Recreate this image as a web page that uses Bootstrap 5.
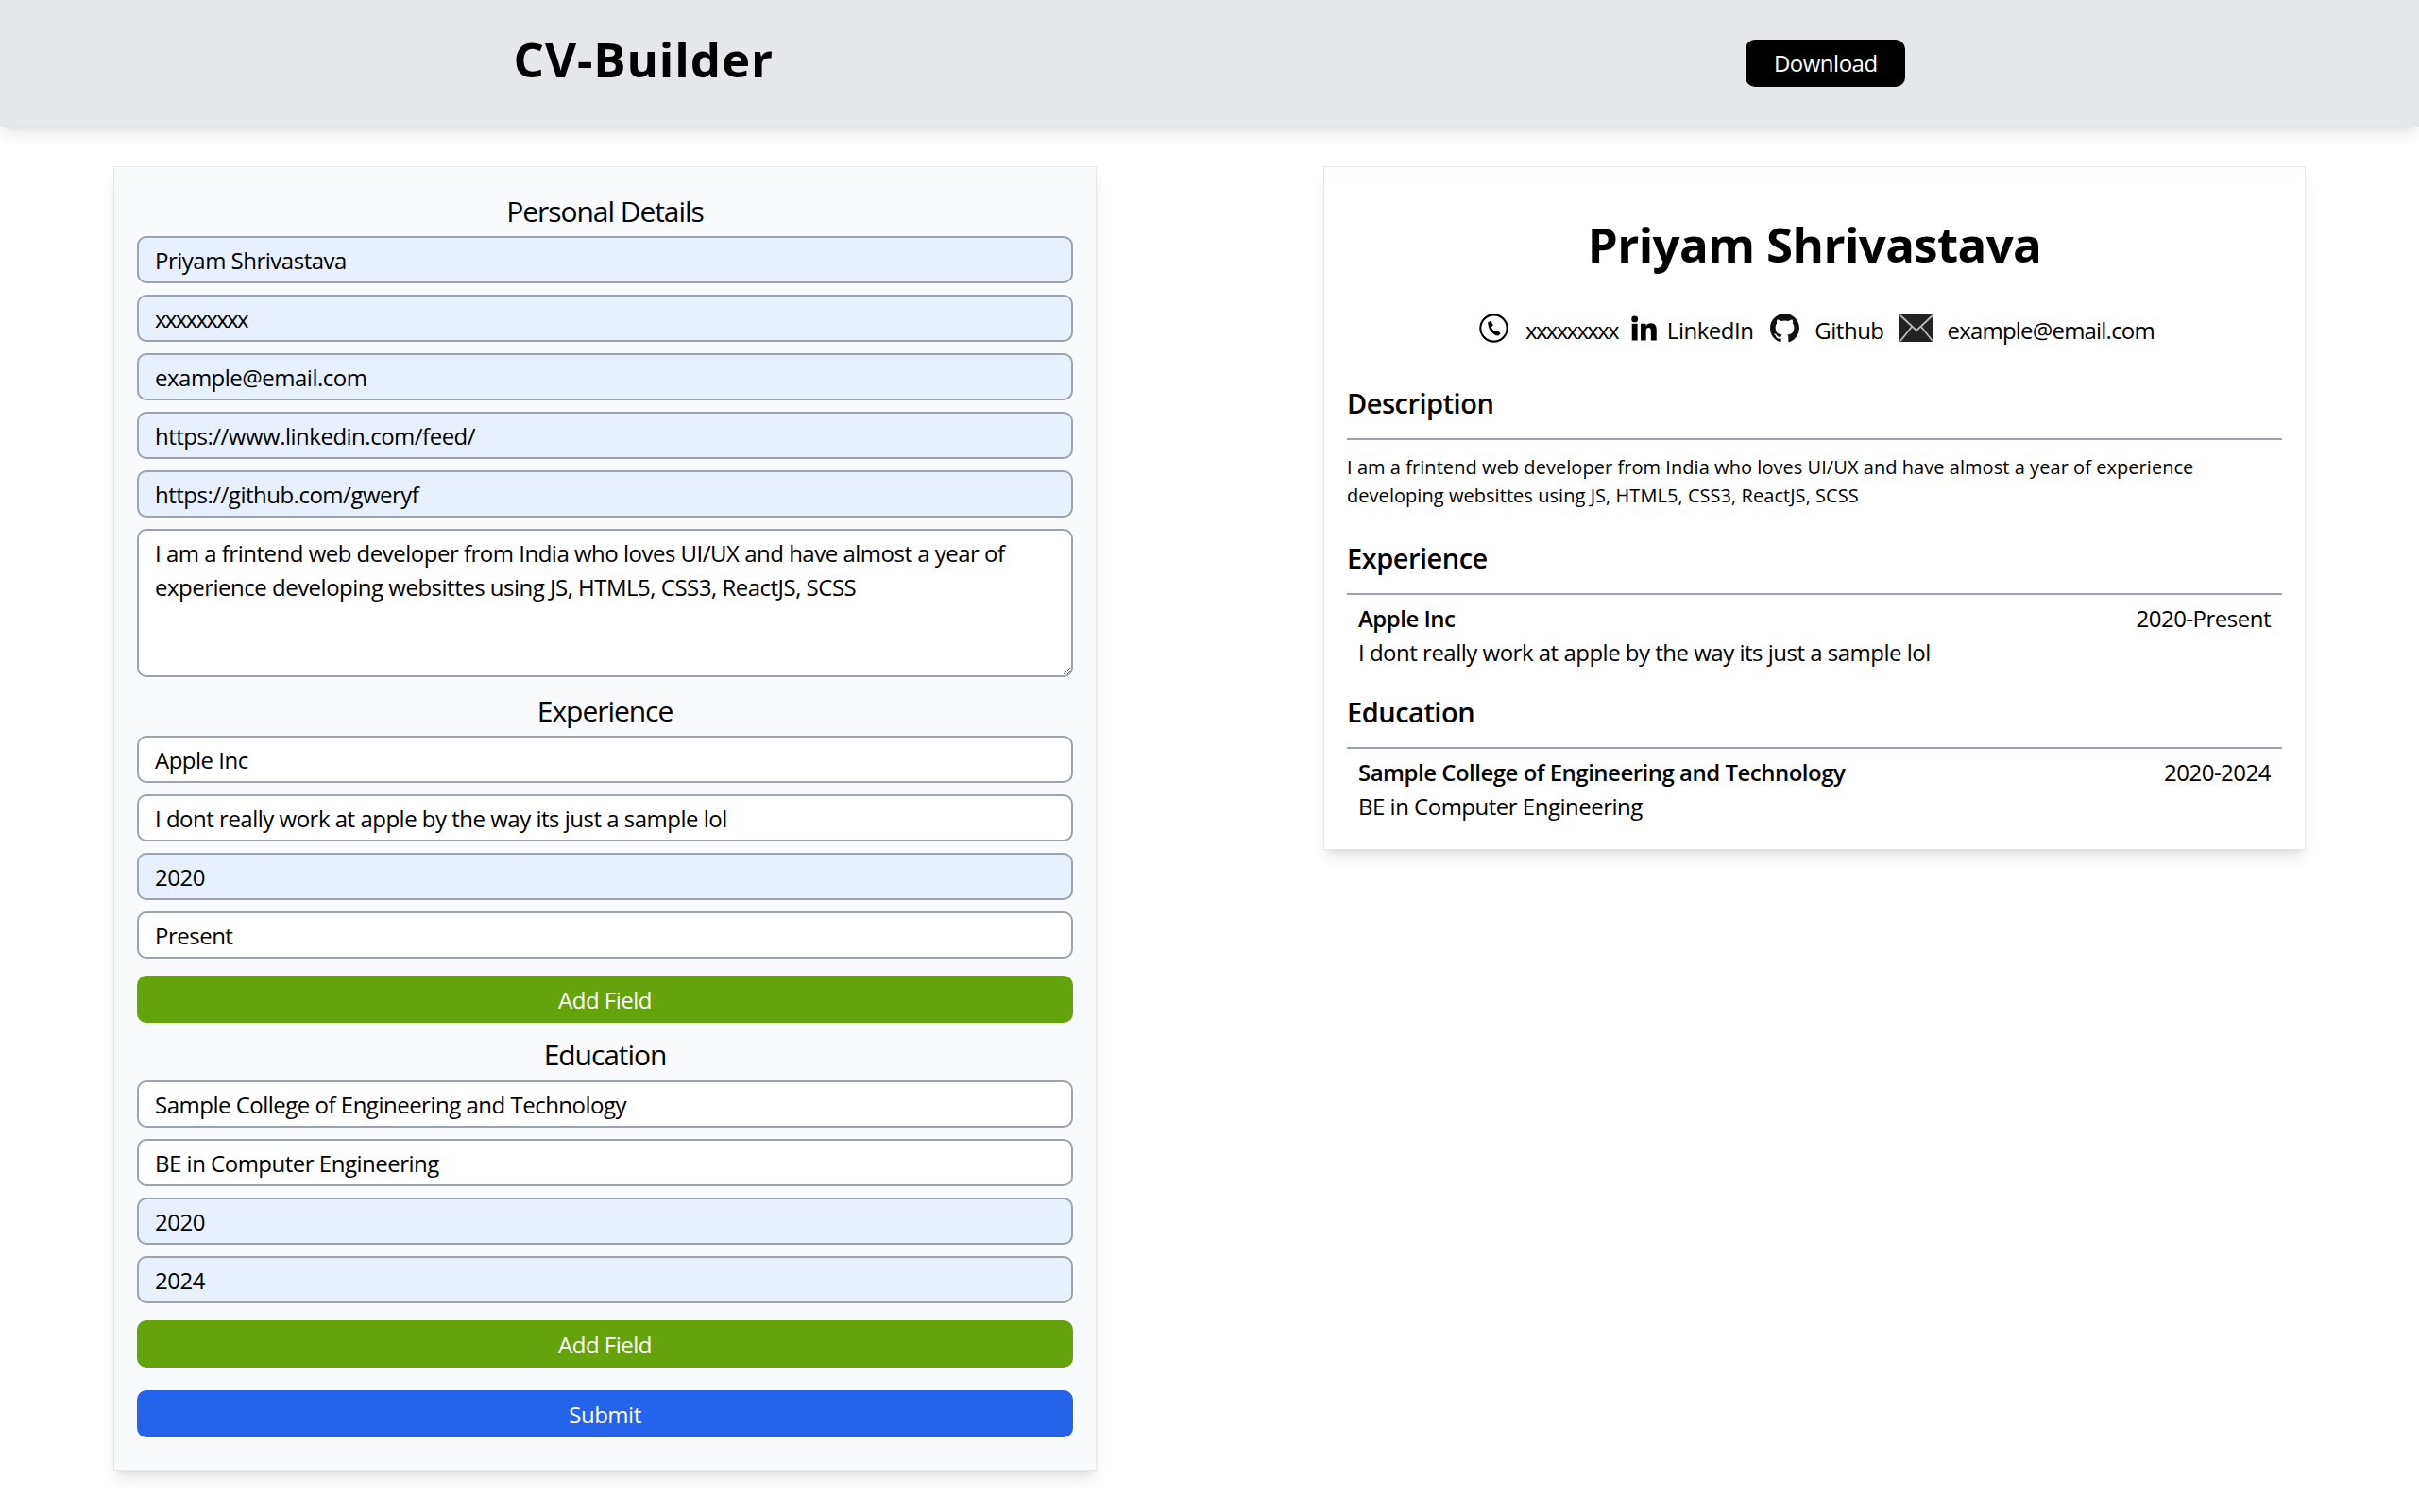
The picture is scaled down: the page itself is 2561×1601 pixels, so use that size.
<!DOCTYPE html>
<html lang="en">
<head>
<meta charset="UTF-8">
<title>CV-Builder</title>
<link href="https://cdn.jsdelivr.net/npm/bootstrap@5.3.3/dist/css/bootstrap.min.css" rel="stylesheet">
<style>
    body { font-family: "Open Sans", "Noto Sans", sans-serif; color: #000; background: #fff; height: 1601px; overflow: hidden; }
    .top-bar { height: 134px; background: #e5e7eb; box-shadow: 0 10px 15px -3px rgba(0,0,0,.1), 0 4px 6px -4px rgba(0,0,0,.1); }
    .top-title { font-size: 51px; font-weight: 700; letter-spacing: .9px; margin: 0; line-height: 64px; padding-left: 82px; padding-bottom: 10px; }
    .btn-download { background: #000; color: #fff; border: 0; border-radius: 10px; width: 169px; height: 50px; font-size: 24px; letter-spacing: -.5px; padding: 0; margin-left: 24px; }
    .page-cols { padding-top: 42px; }
    .panel { border: 1px solid #e5e7eb; padding: 24px; box-shadow: 0 10px 15px -3px rgba(0,0,0,.1), 0 4px 6px -4px rgba(0,0,0,.1); }
    .panel-form { width: 1041px; height: 1382px; margin-left: 120px; background: #f9fafb; }
    .panel-cv { width: 1040px; height: 724px; background: #fff; }
    .form-head { font-size: 30px; letter-spacing: -1.05px; font-weight: 400; line-height: 46px; height: 49px; margin: 0; text-align: center; }
    .head-next { height: 50px; line-height: 48px; margin-top: 12px; }
    .head-edu { margin-top: 9px; height: 52px; line-height: 48px; padding-top: 1px; }
    .cv-input, .cv-input:focus { display: block; width: 100%; height: 50px; margin-bottom: 12px; padding: 1px 17px 0; border: 2px solid #9ca3af; border-radius: 10px; background: #fff; color: #000; font-size: 24px; letter-spacing: -.5px; box-shadow: none; }
    .cv-filled, .cv-filled:focus { background: #e8f0fe; }
    .cv-xs, .cv-xs:focus { letter-spacing: -1.7px; }
    textarea.cv-input { height: 157px; line-height: 36px; padding-top: 6px; margin-bottom: 0; }
    .btn-add, .btn-send { display: block; width: 100%; height: 50px; padding: 2px 0 0; border: 0; border-radius: 10px; color: #fff; font-size: 24px; letter-spacing: -.5px; }
    .btn-add { background: #65a30d; margin-top: 18px; }
    .btn-add:hover { background: #65a30d; color: #fff; }
    .btn-send { background: #2563eb; margin-top: 24px; }
    .btn-send:hover { background: #2563eb; color: #fff; }
    .cv-name { font-size: 51px; font-weight: 700; letter-spacing: -.65px; line-height: 64px; margin: 25px 0 0; text-align: center; }
    .cv-contacts { height: 44px; margin-top: 38px; padding-left: 5px; font-size: 24px; letter-spacing: -.5px; }
    .cv-contacts span { margin-left: 16px; margin-right: 14px; }
    .cv-contacts svg { display: block; flex: none; margin-top: -5px; }
    .gap-phone { margin-left: 18px !important; margin-right: 13px !important; letter-spacing: -1.7px; }
    .gap-in { margin-left: 11px !important; margin-right: 18px !important; }
    .gap-git { margin-right: 16px !important; }
    .gap-mail { margin-left: 15px !important; margin-right: 0 !important; letter-spacing: -.8px; }
    .cv-head { font-size: 29px; font-weight: 600; letter-spacing: -.5px; line-height: 38px; margin: 0; padding-bottom: 18px; border-bottom: 2px solid #9ca3af; }
    .cv-head-first { margin-top: 36px; }
    .cv-text { font-size: 20px; letter-spacing: .05px; line-height: 30px; margin: 14px 0 32px; padding-right: 40px; }
    .cv-entry { padding: 0 12px; margin: 7px 0 26px; font-size: 24px; letter-spacing: -.5px; line-height: 36px; }
    .cv-entry b { font-weight: 600; }
</style>
</head>
<body>
<header class="top-bar row g-0 align-items-center">
    <div class="col-6 text-center"><h1 class="top-title">CV-Builder</h1></div>
    <div class="col-6 text-center"><button class="btn-download">Download</button></div>
</header>

<div class="d-flex page-cols">
    <!-- Formulario -->
    <form class="panel panel-form">
        <h2 class="form-head">Personal Details</h2>
        <input class="cv-input cv-filled form-control" value="Priyam Shrivastava">
        <input class="cv-input cv-filled cv-xs form-control" value="xxxxxxxxx">
        <input class="cv-input cv-filled form-control" value="example@email.com">
        <input class="cv-input cv-filled form-control" value="https://www.linkedin.com/feed/">
        <input class="cv-input cv-filled form-control" value="https://github.com/gweryf">
        <textarea class="cv-input form-control">I am a frintend web developer from India who loves UI/UX and have almost a year of experience developing websittes using JS, HTML5, CSS3, ReactJS, SCSS</textarea>

        <h2 class="form-head head-next">Experience</h2>
        <input class="cv-input form-control" value="Apple Inc">
        <input class="cv-input form-control" value="I dont really work at apple by the way its just a sample lol">
        <input class="cv-input cv-filled form-control" value="2020">
        <input class="cv-input form-control" value="Present">
        <button type="button" class="btn-add">Add Field</button>

        <h2 class="form-head head-edu">Education</h2>
        <input class="cv-input form-control" value="Sample College of Engineering and Technology">
        <input class="cv-input form-control" value="BE in Computer Engineering">
        <input class="cv-input cv-filled form-control" value="2020">
        <input class="cv-input cv-filled form-control" value="2024">
        <button type="button" class="btn-add">Add Field</button>
        <button type="button" class="btn-send">Submit</button>
    </form>

    <div style="width:240px"></div>

    <!-- Preview -->
    <div class="panel panel-cv">
        <h1 class="cv-name">Priyam Shrivastava</h1>
        <div class="cv-contacts d-flex justify-content-center align-items-center">
            <svg width="31" height="31" viewBox="0 0 32 32"><circle cx="16" cy="16" r="14.6" fill="none" stroke="#000" stroke-width="2.2"/><path d="M9.500 9.500l3.200-1.500 2.600 5-2 1.800c.6 2 2.200 3.800 4.200 4.800l2-1.400 4 3.600-2.400 2.400c-6 .2-11.800-7.500-11.600-14.700z" fill="#000"/></svg>
            <span class="gap-phone">xxxxxxxxx</span>
            <svg width="28" height="27" viewBox="0 2 28 27.500"><circle cx="4.500" cy="6" r="3.500" fill="#000"/><rect x="1.500" y="11" width="6" height="18" fill="#000"/><path d="M11 11h5.600v2.500c1-1.800 3-3 5.400-3 4.500 0 6 2.800 6 7V29h-6V18.500c0-2-.7-3.200-2.500-3.200-2.200 0-2.800 1.500-2.800 3.400V29H11z" fill="#000"/></svg>
            <span class="gap-in">LinkedIn</span>
            <svg width="31" height="31" viewBox="0 0 16 16"><path fill="#111" d="M8 0C3.580 0 0 3.580 0 8c0 3.540 2.290 6.530 5.470 7.590.4.070.55-.17.55-.38 0-.19-.01-.82-.01-1.490-2.010.37-2.530-.49-2.690-.94-.09-.23-.48-.94-.82-1.130-.28-.15-.68-.52-.01-.53.63-.01 1.080.58 1.230.82.72 1.210 1.870.87 2.330.66.070-.52.28-.87.51-1.070-1.780-.2-3.640-.89-3.640-3.950 0-.87.31-1.590.82-2.150-.08-.2-.36-1.020.08-2.120 0 0 .67-.21 2.200.82.64-.18 1.320-.27 2-.27.68 0 1.360.09 2 .27 1.530-1.040 2.200-.82 2.200-.82.44 1.100.16 1.920.08 2.120.51.56.82 1.270.82 2.150 0 3.070-1.870 3.750-3.650 3.950.29.25.54.73.54 1.480 0 1.070-.01 1.930-.01 2.200 0 .21.15.46.55.38A8.012 8.012 0 0 0 16 8c0-4.420-3.580-8-8-8z"/></svg>
            <span class="gap-git">Github</span>
            <svg width="36" height="29" viewBox="0 0 36 29"><rect width="36" height="29" rx="1" fill="#222"/><path d="M1 1l17 16L35 1M1 28l12-15M35 28L23 13" fill="none" stroke="#bbb" stroke-width="1.800"/></svg>
            <span class="gap-mail">example@email.com</span>
        </div>

        <h3 class="cv-head cv-head-first">Description</h3>
        <p class="cv-text">I am a frintend web developer from India who loves UI/UX and have almost a year of experience developing websittes using JS, HTML5, CSS3, ReactJS, SCSS</p>

        <h3 class="cv-head">Experience</h3>
        <div class="cv-entry">
            <div class="d-flex justify-content-between"><b>Apple Inc</b><span>2020-Present</span></div>
            <div>I dont really work at apple by the way its just a sample lol</div>
        </div>

        <h3 class="cv-head">Education</h3>
        <div class="cv-entry">
            <div class="d-flex justify-content-between"><b>Sample College of Engineering and Technology</b><span>2020-2024</span></div>
            <div>BE in Computer Engineering</div>
        </div>
    </div>
</div>

<script src="https://cdn.jsdelivr.net/npm/bootstrap@5.3.3/dist/js/bootstrap.bundle.min.js"></script>
</body>
</html>
